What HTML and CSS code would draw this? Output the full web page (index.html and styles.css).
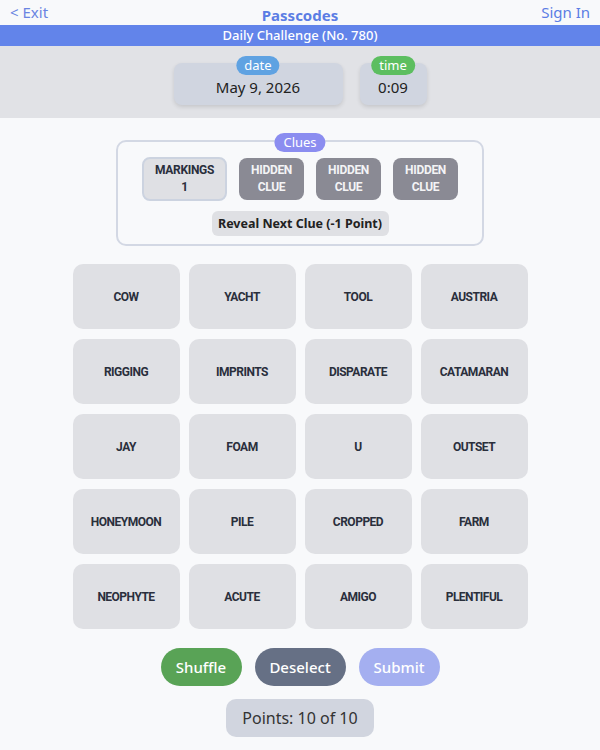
FILE: index.html
```html
<!DOCTYPE html>
<html>
<head>
<meta charset="utf-8">
<link rel="stylesheet" href="styles.css">
</head>
<body>
<header class="topbar">
  <a class="exit">&lt; Exit</a>
  <div class="title">Passcodes</div>
  <a class="signin">Sign In</a>
</header>
<div class="banner">Daily Challenge (No. 780)</div>
<section class="info">
  <div class="card date-card"><span class="badge badge-date">date</span><span class="card-val">May 9, 2026</span></div>
  <div class="card time-card"><span class="badge badge-time">time</span><span class="card-val">0:09</span></div>
</section>
<section class="clues">
  <span class="badge badge-clues">Clues</span>
  <div class="clue-row">
    <div class="clue revealed">MARKINGS<br>1</div>
    <div class="clue hidden">HIDDEN<br>CLUE</div>
    <div class="clue hidden">HIDDEN<br>CLUE</div>
    <div class="clue hidden">HIDDEN<br>CLUE</div>
  </div>
  <button class="reveal">Reveal Next Clue (-1 Point)</button>
</section>
<section class="grid">
  <div class="tile">COW</div><div class="tile">YACHT</div><div class="tile">TOOL</div><div class="tile">AUSTRIA</div>
  <div class="tile">RIGGING</div><div class="tile">IMPRINTS</div><div class="tile">DISPARATE</div><div class="tile">CATAMARAN</div>
  <div class="tile">JAY</div><div class="tile">FOAM</div><div class="tile">U</div><div class="tile">OUTSET</div>
  <div class="tile">HONEYMOON</div><div class="tile">PILE</div><div class="tile">CROPPED</div><div class="tile">FARM</div>
  <div class="tile">NEOPHYTE</div><div class="tile">ACUTE</div><div class="tile">AMIGO</div><div class="tile">PLENTIFUL</div>
</section>
<div class="actions">
  <button class="btn shuffle">Shuffle</button>
  <button class="btn deselect">Deselect</button>
  <button class="btn submit">Submit</button>
</div>
<div class="points-wrap"><div class="points">Points: 10 of 10</div></div>
</body>
</html>
```
FILE: styles.css
```css
* { box-sizing: border-box; }
html, body { margin: 0; padding: 0; }
body {
  background: #f8f9fb;
  font-family: "Noto Sans", "Open Sans", sans-serif;
  color: #222;
  width: 600px;
}
.topbar {
  height: 25px;
  display: flex;
  align-items: center;
  justify-content: space-between;
  padding: 0 10px 0 10px;
  position: relative;
}
.exit { color: #6a84e2; font-size: 15px; line-height: 25px; }
.signin { color: #5b7de4; font-size: 15px; line-height: 25px; }
.title {
  position: absolute;
  left: 0; right: 0; top: 5px;
  text-align: center;
  font-weight: 700;
  font-size: 15px;
  color: #5b7de4;
  pointer-events: none;
}
.banner {
  height: 21px;
  background: #6284ea;
  color: #fff;
  text-align: center;
  font-size: 13px;
  font-weight: 500;
  line-height: 21px;
}
.info {
  height: 72px;
  background: #e1e2e6;
  display: flex;
  justify-content: center;
  gap: 17px;
  padding-top: 17px;
}
.card {
  position: relative;
  height: 42px;
  background: #d0d5e0;
  border-radius: 8px;
  box-shadow: 0 2px 4px rgba(0,0,0,0.12);
  display: flex;
  align-items: center;
  justify-content: center;
  padding-top: 6px;
}
.date-card { width: 169px; }
.time-card { width: 67px; }
.card-val { font-size: 15px; color: #222; }
.badge {
  position: absolute;
  top: -7px;
  left: 50%;
  transform: translateX(-50%);
  height: 19px;
  line-height: 18px;
  padding: 0 8px;
  border-radius: 10px;
  color: #fff;
  font-size: 13px;
}
.badge-date { background: #5fa2e2; }
.badge-time { background: #5cbe60; }
.clues {
  position: relative;
  width: 368px;
  height: 106px;
  margin: 22px auto 0;
  border: 2px solid #d3d8e4;
  border-radius: 10px;
  display: flex;
  flex-direction: column;
  align-items: center;
  padding-top: 15px;
}
.badge-clues { background: #8b8df0; top: -9px; height: 19px; padding: 0 9px; }
.clue-row {
  display: flex;
  align-items: center;
  gap: 12px;
}
.clue {
  font-family: Roboto, "Liberation Sans", Arial, sans-serif;
  font-weight: 700;
  font-size: 12px;
  letter-spacing: -0.3px;
  line-height: 17px;
  text-align: center;
  border-radius: 8px;
  display: flex;
  align-items: center;
  justify-content: center;
}
.revealed {
  width: 85px; height: 44px;
  background: #dfe0e4;
  border: 2px solid #ccd3e0;
  color: #2a2f3c;
}
.hidden {
  width: 65px; height: 42px;
  background: #8a8a94;
  color: #f4f4f6;
}
.reveal {
  margin-top: 10px;
  width: 177px; height: 25px;
  background: #dfe0e4;
  border: none;
  border-radius: 6px;
  font-family: "Noto Sans", sans-serif;
  font-weight: 700;
  font-size: 12.5px;
  color: #222;
  padding: 0;
}
.grid {
  display: grid;
  grid-template-columns: repeat(4, 107px);
  grid-auto-rows: 65px;
  column-gap: 9px;
  row-gap: 10px;
  justify-content: center;
  margin-top: 18px;
}
.tile {
  background: #dfe0e4;
  border-radius: 10px;
  display: flex;
  align-items: center;
  justify-content: center;
  font-family: Roboto, "Liberation Sans", Arial, sans-serif;
  font-weight: 700;
  font-size: 12px;
  letter-spacing: -0.5px;
  color: #2a2f3c;
}
.actions {
  display: flex;
  justify-content: center;
  gap: 13px;
  margin-top: 19px;
}
.btn {
  height: 38px;
  border: none;
  border-radius: 19px;
  color: #fff;
  font-family: "Noto Sans", sans-serif;
  font-size: 15px;
  font-weight: 500;
  padding: 0;
}
.shuffle { width: 81px; background: #59a356; }
.deselect { width: 91px; background: #667085; }
.submit { width: 81px; background: #a4aff0; }
.points-wrap { display: flex; justify-content: center; margin-top: 13px; }
.points {
  width: 148px; height: 38px;
  background: #d1d5df;
  border-radius: 10px;
  font-size: 16px;
  color: #333;
  display: flex; align-items: center; justify-content: center;
}
```
